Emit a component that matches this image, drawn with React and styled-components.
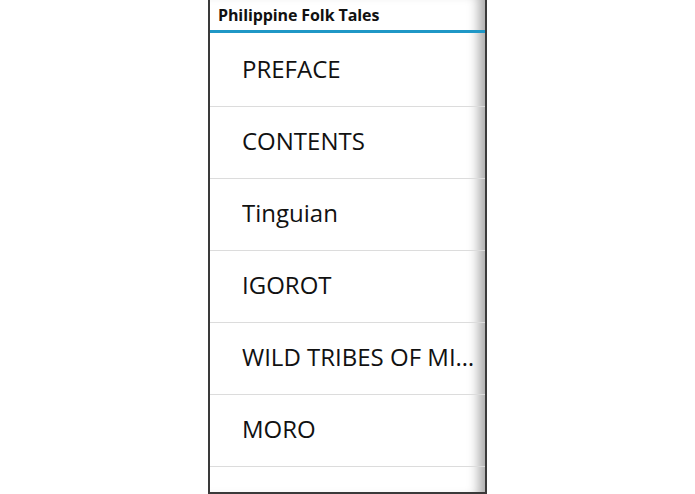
import React from 'react';
import styled, { createGlobalStyle } from 'styled-components';

const GlobalStyle = createGlobalStyle`
  html, body {
    margin: 0;
    padding: 0;
    background: #ffffff;
  }
  body {
    font-family: "Open Sans", "Noto Sans", sans-serif;
  }
`;

const Page = styled.div`
  display: flex;
  justify-content: center;
  height: 494px;
  overflow: hidden;
`;

const Frame = styled.div`
  width: 275px;
  height: 492px;
  border-left: 2px solid #3a3a3a;
  border-right: 2px solid #3a3a3a;
  border-bottom: 2px solid #3a3a3a;
  box-shadow: inset -14px 0 12px -8px rgba(0, 0, 0, 0.35);
  display: flex;
  flex-direction: column;
  overflow: hidden;
`;

const TitleBar = styled.div`
  height: 30px;
  padding-left: 8px;
  display: flex;
  align-items: center;
  font-weight: 700;
  font-size: 16px;
  letter-spacing: -0.1px;
  color: #111;
  border-bottom: 3px solid #1f97c6;
  flex-shrink: 0;
`;

const List = styled.ul`
  list-style: none;
  margin: 0;
  padding: 2px 0 0;
`;

const Row = styled.li`
  height: 71px;
  box-sizing: border-box;
  height: 72px;
  border-bottom: 1px solid #dcdcdc;
  padding: 0 4px 4px 32px;
  display: flex;
  align-items: center;
  font-size: 24px;
  color: #111;
  min-width: 0;
`;

const Label = styled.span`
  white-space: nowrap;
  overflow: hidden;
  text-overflow: ellipsis;
`;

const chapters = [
  'PREFACE',
  'CONTENTS',
  'Tinguian',
  'IGOROT',
  'WILD TRIBES OF MINDANAO',
  'MORO',
  'CHRISTIANIZED TRIBES',
];

export default function App() {
  return (
    <>
      <GlobalStyle />
      <Page>
        <Frame>
          <TitleBar>Philippine Folk Tales</TitleBar>
          <List>
            {chapters.map((c) => (
              <Row key={c}>
                <Label>{c}</Label>
              </Row>
            ))}
          </List>
        </Frame>
      </Page>
    </>
  );
}
